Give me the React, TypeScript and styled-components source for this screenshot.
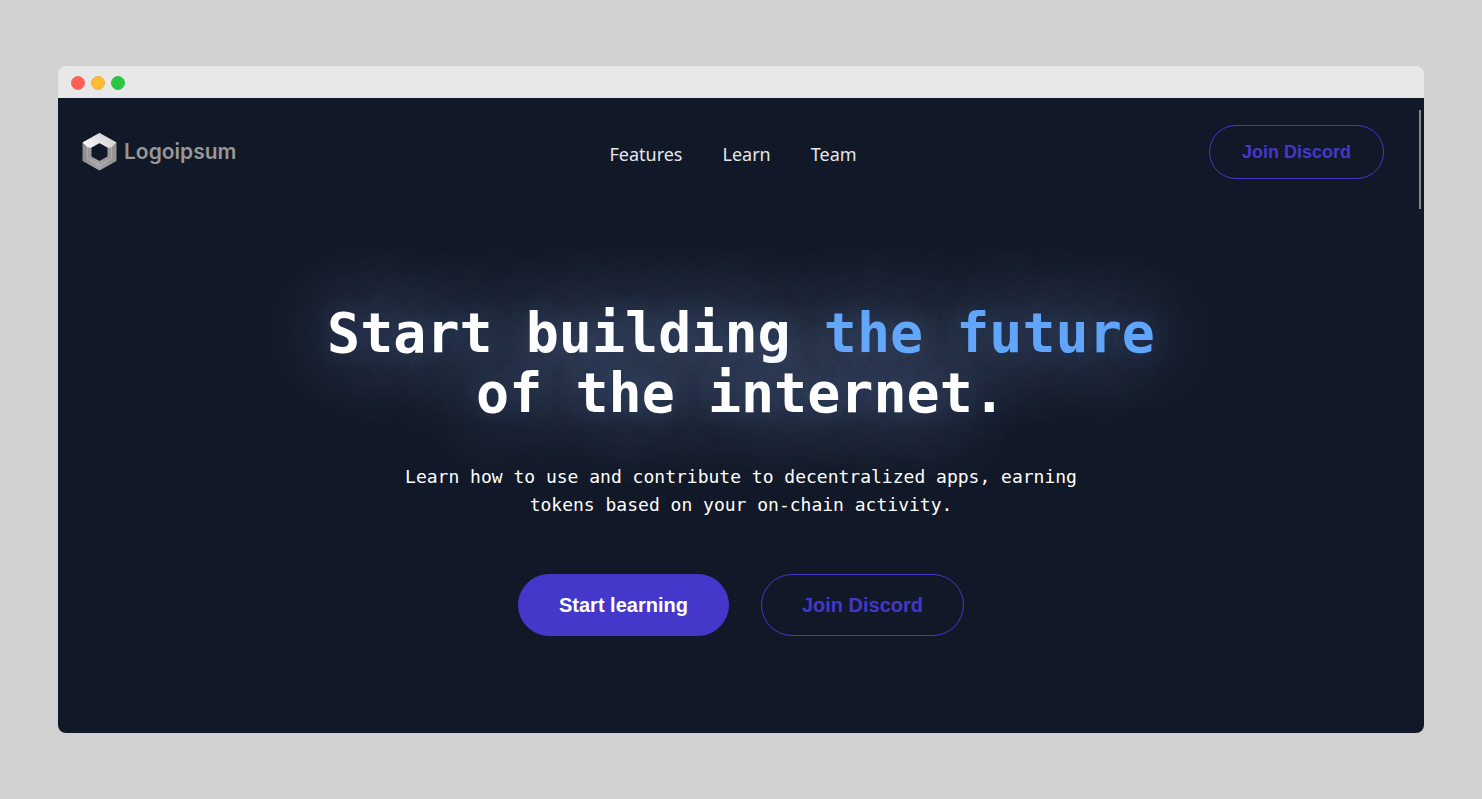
import React from "react";
import styled, { createGlobalStyle, css } from "styled-components";

const GlobalStyle = createGlobalStyle`
  *, *::before, *::after { box-sizing: border-box; }
  body {
    margin: 0;
    background: #d1d1d1;
    font-family: "Noto Sans", sans-serif;
  }
`;

const Desktop = styled.div`
  display: flex;
  min-height: 100vh;
  padding: 66px 58px;
`;

const BrowserWindow = styled.div`
  flex: 1;
  display: flex;
  flex-direction: column;
`;

const TitleBar = styled.div`
  display: flex;
  align-items: center;
  gap: 6px;
  height: 32px;
  padding: 2px 13px 0;
  border-radius: 8px 8px 0 0;
  background: #e8e8e8;
`;

const Light = styled.span<{ $fill: string; $edge: string }>`
  width: 14px;
  height: 14px;
  border-radius: 50%;
  background: ${(p) => p.$fill};
  border: 1px solid ${(p) => p.$edge};
`;

const Page = styled.div`
  position: relative;
  flex: 1;
  border-radius: 0 0 8px 8px;
  background: #111827;
`;

const ScrollThumb = styled.div`
  position: absolute;
  top: 12px;
  right: 3px;
  width: 2px;
  height: 99px;
  background: #888888;
`;

const Header = styled.header`
  display: grid;
  grid-template-columns: 1fr auto 1fr;
  align-items: center;
  padding: 27px 40px 27px 24px;
`;

const Logo = styled.a`
  justify-self: start;
  display: flex;
  align-items: center;
  gap: 6px;
  color: #979797;
  font: 600 21px/30px Inter, sans-serif;
  text-decoration: none;
`;

const Nav = styled.nav`
  display: flex;
  gap: 40px;
  padding-top: 4px;
`;

const NavLink = styled.a`
  color: #e5e7eb;
  font-size: 18px;
  line-height: 28px;
  text-decoration: none;
`;

const Button = styled.button<{ $filled?: boolean; $compact?: boolean }>`
  border: 1px solid #4338ca;
  border-radius: 32px;
  font-family: "Liberation Sans", Arial, sans-serif;
  font-weight: 700;
  cursor: pointer;
  ${(p) =>
    p.$filled
      ? css`
          background: #4338ca;
          color: #ffffff;
        `
      : css`
          background: transparent;
          color: #4338ca;
        `}
  ${(p) =>
    p.$compact
      ? css`
          justify-self: end;
          padding: 12px 32px;
          font-size: 18px;
          line-height: 28px;
        `
      : css`
          padding: 16px 40px;
          font-size: 20px;
          line-height: 28px;
        `}
`;

const Hero = styled.main`
  display: flex;
  flex-direction: column;
  align-items: center;
  padding: 97px 24px;
  color: #ffffff;
  font-family: "DejaVu Sans Mono", monospace;
  text-align: center;
`;

const Title = styled.h1`
  margin: 0;
  font-size: 55px;
  font-weight: 700;
  line-height: 60px;
  text-shadow: 0 0 88px rgba(192, 219, 255, 0.9), 0 0 32px rgba(65, 120, 255, 0.24);
`;

const Accent = styled.span`
  color: #60a5fa;
`;

const Lead = styled.p`
  max-width: 720px;
  margin: 40px 0 0;
  font-size: 18px;
  line-height: 28px;
`;

const Actions = styled.div`
  display: flex;
  gap: 32px;
  margin-top: 55px;
`;

const LogoMark = () => (
  <svg width="36" height="38" viewBox="0 0 36 38" aria-hidden="true">
    <defs>
      <linearGradient id="top" x1="0" y1="0.7" x2="1" y2="0.3">
        <stop offset="0" stopColor="#f8f8f8" />
        <stop offset="1" stopColor="#cdcdcd" />
      </linearGradient>
      <linearGradient id="side" x1="0" y1="0" x2="1" y2="0">
        <stop offset="0" stopColor="#8d8d8d" />
        <stop offset="0.4" stopColor="#a4a4a4" />
        <stop offset="1" stopColor="#929292" />
      </linearGradient>
    </defs>
    <path
      fill="url(#side)"
      fillRule="evenodd"
      d="M17.500 0 34.500 9.500V28L17.500 37.500 0.500 28V9.500ZM17.500 10 9.500 14.500V23.500L17.500 28 25.500 23.500V14.500Z"
    />
    <path fill="none" stroke="#c4c4c4" strokeWidth="0.500" d="M5.500 12.500V25.500L17.500 32.500 29.500 25.500V12.500" />
    <path fill="url(#top)" d="M17.500 0 34.500 9.500 29 14.500 25.500 14.500 17.500 10 9.500 14.500 6 14.500 0.500 9.500Z" />
  </svg>
);

export default function App() {
  return (
    <>
      <GlobalStyle />
      <Desktop>
        <BrowserWindow>
          <TitleBar>
            <Light $fill="#ff5f57" $edge="#ee6a62" />
            <Light $fill="#febc2e" $edge="#e8b04a" />
            <Light $fill="#28c840" $edge="#3cb950" />
          </TitleBar>
          <Page>
            <Header>
              <Logo href="#">
                <LogoMark />
                Logoipsum
              </Logo>
              <Nav aria-label="Main">
                <NavLink href="#features">Features</NavLink>
                <NavLink href="#learn">Learn</NavLink>
                <NavLink href="#team">Team</NavLink>
              </Nav>
              <Button type="button" $compact>Join Discord</Button>
            </Header>
            <Hero>
              <Title>
                Start building <Accent>the future</Accent>
                <br />
                of the internet.
              </Title>
              <Lead>
                Learn how to use and contribute to decentralized apps, earning tokens based on your
                on-chain activity.
              </Lead>
              <Actions>
                <Button type="button" $filled>Start learning</Button>
                <Button type="button">Join Discord</Button>
              </Actions>
            </Hero>
            <ScrollThumb />
          </Page>
        </BrowserWindow>
      </Desktop>
    </>
  );
}
